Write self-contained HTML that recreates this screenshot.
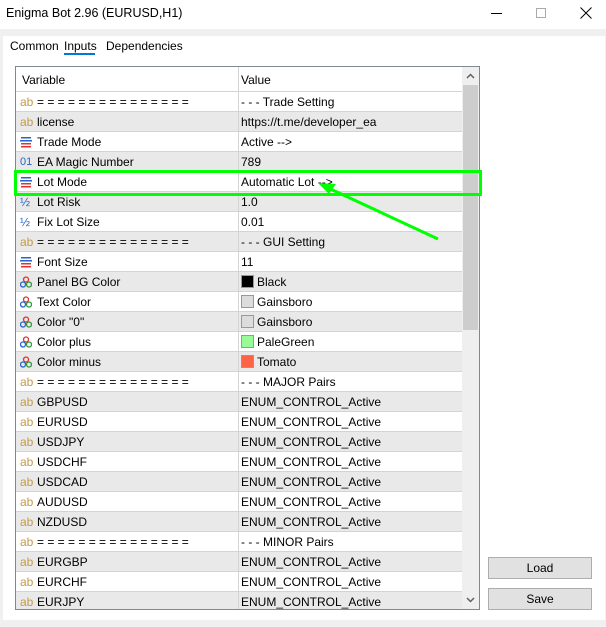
<!DOCTYPE html>
<html><head><style>
*{margin:0;padding:0;box-sizing:border-box}
body{width:606px;height:627px;background:#f0f0f0;font-family:"Liberation Sans",sans-serif;font-size:12px;color:#000;position:relative;overflow:hidden}
.title{position:absolute;left:0;top:0;width:606px;height:29px;background:#fff}
.title span{position:absolute;left:6px;top:6px;font-size:12.5px}
.panel{position:absolute;left:3px;top:36px;width:602px;height:584px;background:#fff}
.tabs span{position:absolute;top:39px}
.tbl{position:absolute;left:15px;top:66px;width:465px;height:544px;border:1px solid #828790;overflow:hidden;background:#fff}
.row{position:absolute;left:0;width:446px;height:20px;border-bottom:1px solid #d4d4d4}
.row.g{background:#e9e9e9}
.row .v{position:absolute;left:21px;top:3px;white-space:nowrap}
.row .w{position:absolute;left:225px;top:3px;white-space:nowrap}
.row .ic{position:absolute;left:4px;top:2px;font-size:12px}
.div{position:absolute;left:222px;top:0;width:1px;height:544px;background:#d4d4d4}
.ab{color:#c59a4a}
.sw{position:absolute;left:225px;top:3px;width:13px;height:13px;border:1px solid #999}
.sb{position:absolute;left:446px;top:0;width:17px;height:542px;background:#efefef}
.btn{position:absolute;left:488px;width:104px;height:22px;background:#e1e1e1;border:1px solid #adadad;text-align:center;line-height:20px}
</style></head><body>
<div class="title"><span>Enigma Bot 2.96 (EURUSD,H1)</span>
<div style="position:absolute;left:491px;top:13px;width:11px;height:1px;background:#000"></div>
<div style="position:absolute;left:536px;top:8px;width:10px;height:10px;border:1px solid #aaa"></div>
<svg style="position:absolute;left:580px;top:7px" width="12" height="12"><path d="M0.5 0.5L11.5 11.5M11.5 0.5L0.5 11.5" stroke="#000" stroke-width="1"/></svg>
</div>
<div class="panel"></div>
<div class="tabs"><span style="left:10px">Common</span><span style="left:64px">Inputs</span><span style="left:106px">Dependencies</span></div>
<div style="position:absolute;left:64px;top:53px;width:31px;height:2px;background:#0078d7"></div>
<div class="tbl">
<div style="position:absolute;left:0;top:0;width:446px;height:25px;border-bottom:1px solid #d4d4d4"><span style="position:absolute;left:6px;top:6px">Variable</span><span style="position:absolute;left:225px;top:6px">Value</span></div>
<div id="rows"></div>
<div class="div"></div>
<div class="sb"><div style="position:absolute;left:1px;top:18px;width:15px;height:245px;background:#cdcdcd"></div>
<svg style="position:absolute;left:4px;top:6px" width="9" height="6"><path d="M1 5L4.5 1.5L8 5" stroke="#606060" stroke-width="1.5" fill="none"/></svg>
<svg style="position:absolute;left:4px;top:530px" width="9" height="6"><path d="M1 1L4.5 4.5L8 1" stroke="#606060" stroke-width="1.5" fill="none"/></svg></div>
</div>
<div class="btn" style="top:557px">Load</div>
<div class="btn" style="top:588px">Save</div>
<div style="position:absolute;left:14px;top:170px;width:468px;height:26px;border:3px solid #00ff00"></div>
<svg style="position:absolute;left:0;top:0" width="606" height="627"><path d="M438 239L324 186" stroke="#00ff00" stroke-width="3"/><path d="M318 183L336 184L329 194Z" fill="#00ff00"/></svg>
<script>
var enumI='<svg class="ic" style="top:4px" width="12" height="12"><rect x="1" y="1" width="10" height="1.5" fill="#2a62c9"/><rect x="0" y="4" width="12" height="1.5" fill="#2a62c9"/><rect x="1" y="7" width="10" height="1.5" fill="#d33"/><rect x="1" y="10" width="10" height="1.5" fill="#d33"/></svg>';
var ab='<span class="ic ab" style="top:3px">ab</span>';
var half='<span class="ic" style="color:#2a62c9;top:3px">&#189;</span>';
var o1='<span class="ic" style="color:#2a62c9;font-size:11px;top:4px">01</span>';
var col='<svg class="ic" style="top:4px" width="12" height="12"><circle cx="6" cy="3.5" r="2.5" fill="none" stroke="#d33" stroke-width="1.3"/><circle cx="3" cy="8.5" r="2.5" fill="none" stroke="#2a62c9" stroke-width="1.3"/><circle cx="9" cy="8.5" r="2.5" fill="none" stroke="#2a9a3a" stroke-width="1.3"/></svg>';
var eq='= = = = = = = = = = = = = = =';
var R=[[ab,eq,'- - - Trade Setting'],[ab,'license','https://t.me/developer_ea'],[enumI,'Trade Mode','Active -->'],[o1,'EA Magic Number','789'],[enumI,'Lot Mode','Automatic Lot -->'],[half,'Lot Risk','1.0'],[half,'Fix Lot Size','0.01'],[ab,eq,'- - - GUI Setting'],[enumI,'Font Size','11'],[col,'Panel BG Color','Black','#000'],[col,'Text Color','Gainsboro','#dcdcdc'],[col,'Color "0"','Gainsboro','#dcdcdc'],[col,'Color plus','PaleGreen','#98fb98'],[col,'Color minus','Tomato','#ff6347'],[ab,eq,'- - - MAJOR Pairs']];
['GBPUSD','EURUSD','USDJPY','USDCHF','USDCAD','AUDUSD','NZDUSD'].forEach(function(p){R.push([ab,p,'ENUM_CONTROL_Active'])});
R.push([ab,eq,'- - - MINOR Pairs']);
['EURGBP','EURCHF','EURJPY'].forEach(function(p){R.push([ab,p,'ENUM_CONTROL_Active'])});
var h='';
R.forEach(function(r,i){var top=25+i*20;var val=r[3]?'<div class="sw" style="background:'+r[3]+'"></div><span class="w" style="left:241px">'+r[2]+'</span>':'<span class="w">'+r[2]+'</span>';
h+='<div class="row'+(i%2?' g':'')+'" style="top:'+top+'px">'+r[0]+'<span class="v">'+r[1]+'</span>'+val+'</div>';});
document.getElementById('rows').innerHTML=h;
</script>
</body></html>
